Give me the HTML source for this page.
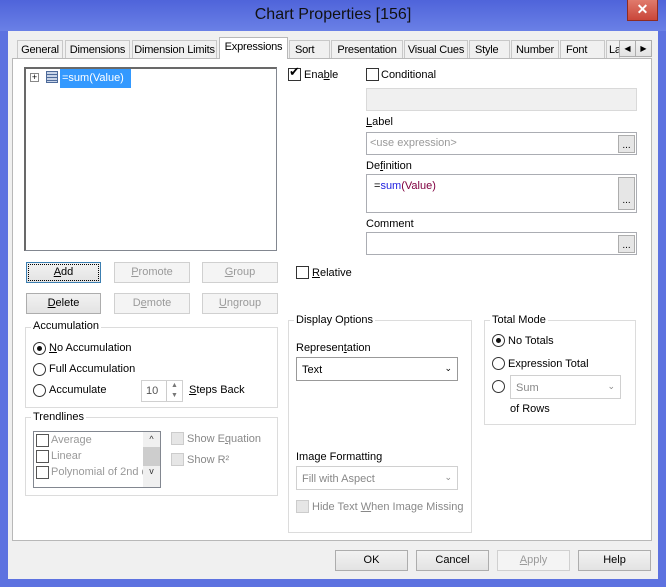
<!DOCTYPE html>
<html><head><style>
*{box-sizing:border-box;margin:0;padding:0}
body{width:666px;height:587px;overflow:hidden;background:#5d72e0;font-family:"Liberation Sans",sans-serif;font-size:11px;color:#000;position:relative}
.a{position:absolute;white-space:nowrap}
.title{left:0;top:0;width:666px;height:31px;background:linear-gradient(#4f64da,#6a80e6);}
.title span{position:absolute;left:0;width:666px;top:6px;text-align:center;font-size:16px;color:#111}
.close{left:627px;top:0;width:31px;height:21px;background:linear-gradient(#e07a6c,#c9463a);border:1px solid #8e2b22;border-top:none;color:#fff;font-weight:bold;font-size:14px;text-align:center;line-height:19px}
.body{left:8px;top:31px;width:650px;height:548px;background:#f0f0f0}
.tab{top:40px;height:18px;background:#f0f0f0;border:1px solid #c8c8c8;border-bottom:none;padding:3px 0 0 0;text-align:center;overflow:hidden;letter-spacing:-0.2px}
.tab.sel{top:37px;height:22px;background:#fff;z-index:2;border-color:#b8b8b8}
.panel{left:12px;top:58px;width:640px;height:483px;background:#fff;border:1px solid #b8b8b8}
.box{background:#fff;border:1px solid #abadb3}
.btn{height:21px;border:1px solid #adadad;background:linear-gradient(#f2f2f2,#e3e3e3);text-align:center;line-height:19px}
.dis{color:#9a9a9a;border-color:#d0d0d0;background:#f4f4f4}
.grp{border:1px solid #dcdcdc}
.gl{background:#fff;padding:0 2px}
.cb{width:13px;height:13px;border:1px solid #333;background:#fff}
.rb{width:13px;height:13px;border:1px solid #333;border-radius:50%;background:#fff}
.dots{width:17px;height:18px;border:1px solid #adadad;background:#e6e6e6;font-size:10px;text-align:center;line-height:20px}
u{text-decoration:underline}
</style></head><body>
<div class="a title"><span>Chart Properties [156]</span></div>
<div class="a close">✕</div>
<div class="a body"></div>
<div class="a panel"></div>
<div class="a tab" style="left:17px;width:46px">General</div>
<div class="a tab" style="left:65px;width:65px">Dimensions</div>
<div class="a tab" style="left:132px;width:85px">Dimension Limits</div>
<div class="a tab sel" style="left:219px;width:69px">Expressions</div>
<div class="a tab" style="left:289px;width:41px;text-align:left;padding-left:5px">Sort</div>
<div class="a tab" style="left:331px;width:72px">Presentation</div>
<div class="a tab" style="left:404px;width:64px">Visual Cues</div>
<div class="a tab" style="left:469px;width:41px;text-align:left;padding-left:5px">Style</div>
<div class="a tab" style="left:511px;width:48px">Number</div>
<div class="a tab" style="left:560px;width:45px;text-align:left;padding-left:5px">Font</div>
<div class="a tab" style="left:606px;width:14px;text-align:left;padding-left:2px">La</div>
<div class="a btn" style="left:619px;top:40px;width:17px;height:17px;font-size:8px;line-height:15px">◀</div>
<div class="a btn" style="left:635px;top:40px;width:17px;height:17px;font-size:8px;line-height:15px">▶</div>

<div class="a box" style="left:24px;top:67px;width:253px;height:184px;border-color:#828790;border-top:2px solid #696969;border-left:2px solid #696969"></div>
<div class="a" style="left:30px;top:73px;width:9px;height:9px;border:1px solid #888;font-size:9px;line-height:7px;text-align:center">+</div>
<div class="a" style="left:46px;top:71px;width:12px;height:12px;border:1px solid #4d6a9a;background:repeating-linear-gradient(#c8d4e8 0 2px,#4d6a9a 2px 3px)"></div>
<div class="a" style="left:60px;top:69px;width:71px;height:19px;background:#3399ff;color:#fff;padding:3px 0 0 2px">=sum(Value)</div>

<div class="a btn" style="left:26px;top:262px;width:75px;border-color:#3c7fb1;outline:1px dotted #000;outline-offset:-3px"><u>A</u>dd</div>
<div class="a btn dis" style="left:114px;top:262px;width:76px"><u>P</u>romote</div>
<div class="a btn dis" style="left:202px;top:262px;width:76px"><u>G</u>roup</div>
<div class="a btn" style="left:26px;top:293px;width:75px"><u>D</u>elete</div>
<div class="a btn dis" style="left:114px;top:293px;width:76px">D<u>e</u>mote</div>
<div class="a btn dis" style="left:202px;top:293px;width:76px"><u>U</u>ngroup</div>

<div class="a grp" style="left:25px;top:327px;width:253px;height:81px"></div>
<div class="a gl" style="left:31px;top:320px">Accumulation</div>
<div class="a rb" style="left:33px;top:342px"></div><div class="a" style="left:37px;top:346px;width:5px;height:5px;border-radius:50%;background:#111"></div>
<div class="a" style="left:49px;top:342px"><u>N</u>o Accumulation</div>
<div class="a rb" style="left:33px;top:363px"></div><div class="a" style="left:49px;top:363px">Full Accumulation</div>
<div class="a rb" style="left:33px;top:384px"></div><div class="a" style="left:49px;top:384px">Accumulate</div>
<div class="a box" style="left:141px;top:380px;width:42px;height:22px;border-color:#d0d0d0;color:#555;padding:4px 0 0 4px">10</div>
<div class="a" style="left:166px;top:381px;width:16px;height:20px;border-left:1px solid #ccc;font-size:7px;color:#777;text-align:center;line-height:10px">▲<br>▼</div>
<div class="a" style="left:189px;top:384px"><u>S</u>teps Back</div>

<div class="a grp" style="left:25px;top:417px;width:253px;height:79px"></div>
<div class="a gl" style="left:31px;top:411px">Trendlines</div>
<div class="a" style="left:33px;top:431px;width:128px;height:57px;border:1px solid #828790;background:#fff;overflow:hidden;color:#999;line-height:16px">
<div style="padding-left:17px;position:relative">Average<span class="a cb" style="left:2px;top:2px;border-color:#555"></span></div>
<div style="padding-left:17px;position:relative">Linear<span class="a cb" style="left:2px;top:2px;border-color:#555"></span></div>
<div style="padding-left:17px;position:relative;white-space:nowrap">Polynomial of 2nd d<span class="a cb" style="left:2px;top:2px;border-color:#555"></span></div>
</div>
<div class="a" style="left:143px;top:432px;width:17px;height:55px;background:#f0f0f0;font-size:9px;text-align:center;color:#333"><div style="height:15px;line-height:15px">^</div><div style="height:19px;background:#cdcdcd"></div><div>v</div></div>
<div class="a cb" style="left:171px;top:432px;border-color:#ccc;background:#e6e6e6"></div><div class="a" style="left:187px;top:433px;color:#888">Show E<u>q</u>uation</div>
<div class="a cb" style="left:171px;top:453px;border-color:#ccc;background:#e6e6e6"></div><div class="a" style="left:187px;top:454px;color:#888">Show R²</div>

<div class="a cb" style="left:288px;top:68px"></div><div class="a" style="left:289px;top:64px;font-size:13px">✔</div>
<div class="a" style="left:304px;top:69px">Ena<u>b</u>le</div>
<div class="a cb" style="left:366px;top:68px"></div><div class="a" style="left:381px;top:69px">Conditional</div>
<div class="a" style="left:366px;top:88px;width:271px;height:23px;background:#f0f0f0;border:1px solid #d9d9d9"></div>
<div class="a" style="left:366px;top:116px"><u>L</u>abel</div>
<div class="a box" style="left:366px;top:132px;width:271px;height:23px;color:#999;padding:4px 0 0 3px">&lt;use expression&gt;</div>
<div class="a dots" style="left:618px;top:135px">...</div>
<div class="a" style="left:366px;top:160px">De<u>f</u>inition</div>
<div class="a box" style="left:366px;top:174px;width:271px;height:39px;padding:5px 0 0 7px">=<span style="color:#2020e0">sum</span><span style="color:#800040">(Value)</span></div>
<div class="a dots" style="left:618px;top:177px;height:33px;line-height:46px">...</div>
<div class="a" style="left:366px;top:218px">Comment</div>
<div class="a box" style="left:366px;top:232px;width:271px;height:23px"></div>
<div class="a dots" style="left:618px;top:235px">...</div>
<div class="a cb" style="left:296px;top:266px"></div><div class="a" style="left:312px;top:267px"><u>R</u>elative</div>

<div class="a grp" style="left:288px;top:320px;width:184px;height:213px"></div>
<div class="a gl" style="left:294px;top:314px">Display Options</div>
<div class="a" style="left:296px;top:342px">Represen<u>t</u>ation</div>
<div class="a box" style="left:296px;top:357px;width:162px;height:24px;border-color:#999;padding:6px 0 0 5px">Text<span class="a" style="right:5px;top:5px;font-size:9px">⌄</span></div>
<div class="a" style="left:296px;top:451px">Image Formatting</div>
<div class="a box" style="left:296px;top:466px;width:162px;height:24px;border-color:#d0d0d0;color:#888;padding:6px 0 0 5px">Fill with Aspect<span class="a" style="right:5px;top:5px;font-size:9px">⌄</span></div>
<div class="a cb" style="left:296px;top:500px;border-color:#ccc;background:#e6e6e6"></div><div class="a" style="left:312px;top:501px;color:#888">Hide Text <u>W</u>hen Image Missing</div>

<div class="a grp" style="left:484px;top:320px;width:152px;height:105px"></div>
<div class="a gl" style="left:490px;top:314px">Total Mode</div>
<div class="a rb" style="left:492px;top:334px"></div><div class="a" style="left:496px;top:338px;width:5px;height:5px;border-radius:50%;background:#111"></div>
<div class="a" style="left:508px;top:335px">No Totals</div>
<div class="a rb" style="left:492px;top:357px"></div><div class="a" style="left:508px;top:358px">Expression Total</div>
<div class="a rb" style="left:492px;top:380px"></div>
<div class="a box" style="left:510px;top:375px;width:111px;height:24px;border-color:#d0d0d0;color:#888;padding:6px 0 0 5px">Sum<span class="a" style="right:5px;top:5px;font-size:9px">⌄</span></div>
<div class="a" style="left:510px;top:403px">of Rows</div>

<div class="a btn" style="left:335px;top:550px;width:73px">OK</div>
<div class="a btn" style="left:416px;top:550px;width:73px">Cancel</div>
<div class="a btn dis" style="left:497px;top:550px;width:73px"><u>A</u>pply</div>
<div class="a btn" style="left:578px;top:550px;width:73px">Help</div>
</body></html>
